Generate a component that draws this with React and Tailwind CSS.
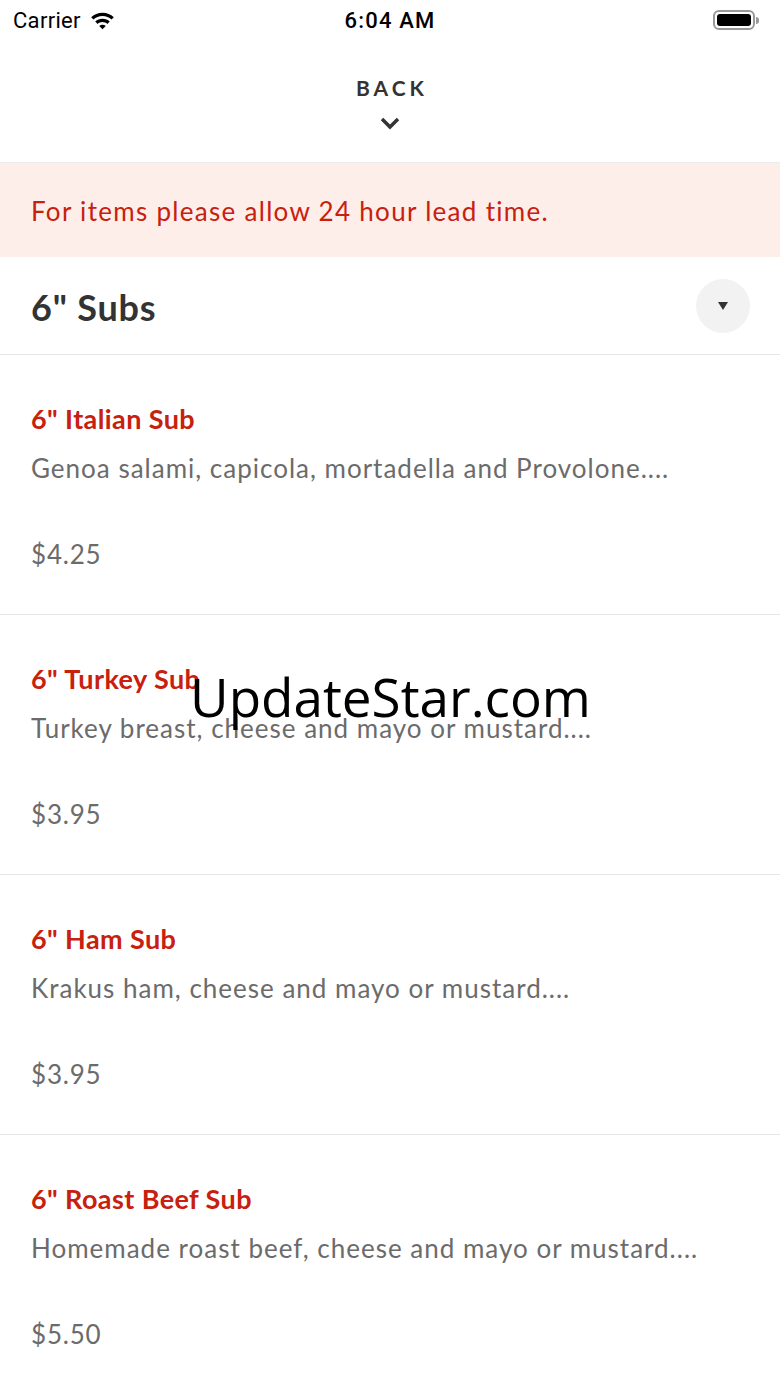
import React from 'react';

const items = [
  { name: '6" Italian Sub', desc: 'Genoa salami, capicola, mortadella and Provolone....', price: '$4.25' },
  { name: '6" Turkey Sub', desc: 'Turkey breast, cheese and mayo or mustard....', price: '$3.95' },
  { name: '6" Ham Sub', desc: 'Krakus ham, cheese and mayo or mustard....', price: '$3.95' },
  { name: '6" Roast Beef Sub', desc: 'Homemade roast beef, cheese and mayo or mustard....', price: '$5.50' },
];

const Wifi = () => (
  <svg width="27" height="21" viewBox="0 0 26 20" fill="#000">
    <path d="M13 2.5c4.2 0 8 1.6 10.9 4.3l-2.2 2.3C19.4 7 16.4 5.7 13 5.7S6.6 7 4.3 9.1L2.1 6.8C5 4.1 8.8 2.5 13 2.5z" />
    <path d="M13 8.3c2.7 0 5.1 1 7 2.7l-2.3 2.3c-1.3-1.1-2.9-1.8-4.7-1.8s-3.4.7-4.7 1.8L6 11c1.9-1.7 4.3-2.7 7-2.7z" />
    <path d="M13 14c1.2 0 2.3.4 3.1 1.2L13 18.4l-3.1-3.2c.8-.8 1.9-1.2 3.1-1.2z" />
  </svg>
);

export default function App() {
  return (
    <div className="relative w-[780px] min-h-[1387px] bg-white overflow-hidden" style={{ fontFamily: 'Lato, "Open Sans", sans-serif' }}>
      {/* status bar */}
      <div className="relative h-[40px] flex items-center justify-between px-[13px]" style={{ fontFamily: 'Roboto, "Liberation Sans", sans-serif' }}>
        <div className="flex items-center gap-[8px] text-[22px] text-black">
          <span className="tracking-[0.3px]">Carrier</span>
          <Wifi />
        </div>
        <div className="absolute left-0 right-0 text-center text-[22px] font-medium tracking-[1.2px] text-black">6:04 AM</div>
        <div className="flex items-center pr-[8px]">
          <div className="w-[42px] h-[20px] rounded-[6px] border-2 border-[#999] p-[2px]">
            <div className="w-full h-full rounded-[3px] bg-black" />
          </div>
          <div className="w-[3px] h-[7px] bg-[#999] rounded-r-sm ml-[1px]" />
        </div>
      </div>

      {/* back header */}
      <div className="h-[123px] flex flex-col items-center pt-[37px] border-b border-[#ececec]">
        <div className="text-[21px] font-bold tracking-[4px] pl-[4px] text-[#333] leading-none">BACK</div>
        <svg className="mt-[18px]" width="22" height="14" viewBox="0 0 22 14">
          <path d="M3 3l8 8 8-8" fill="none" stroke="#333" strokeWidth="3.5" />
        </svg>
      </div>

      {/* banner */}
      <div className="h-[94px] bg-[#fdeeea] flex items-center px-[31px] pt-[3px]">
        <span className="text-[26px] tracking-[1.3px] text-[#c8200e]">For items please allow 24 hour lead time.</span>
      </div>

      {/* section header */}
      <div className="h-[98px] flex items-center justify-between px-[31px] border-b border-[#e6e6e6]">
        <span className="text-[36px] font-bold tracking-[0.8px] text-[#333] pt-[3px]">6" Subs</span>
        <div className="w-[54px] h-[54px] rounded-full bg-[#f2f2f2] flex items-center justify-center mr-[-1px]">
          <svg width="12" height="10" viewBox="0 0 12 10"><path d="M1 1h10L6 9z" fill="#333" /></svg>
        </div>
      </div>

      {items.map((it) => (
        <div key={it.name} className="h-[260px] border-b border-[#e6e6e6] px-[31px] pt-[44px]">
          <div className="text-[27px] font-bold tracking-[0.4px] text-[#c8200e] leading-[40px]">{it.name}</div>
          <div className="text-[26px] tracking-[1px] text-[#6b6b6b] leading-[40px] mt-[9px]">{it.desc}</div>
          <div className="text-[26px] tracking-[0.8px] text-[#6b6b6b] leading-[40px] mt-[46px]">{it.price}</div>
        </div>
      ))}

      {/* watermark */}
      <div className="absolute left-[190px] top-[670px] text-[53px] text-black leading-none" style={{ fontFamily: '"Open Sans", sans-serif' }}>
        UpdateStar.com
      </div>
    </div>
  );
}
